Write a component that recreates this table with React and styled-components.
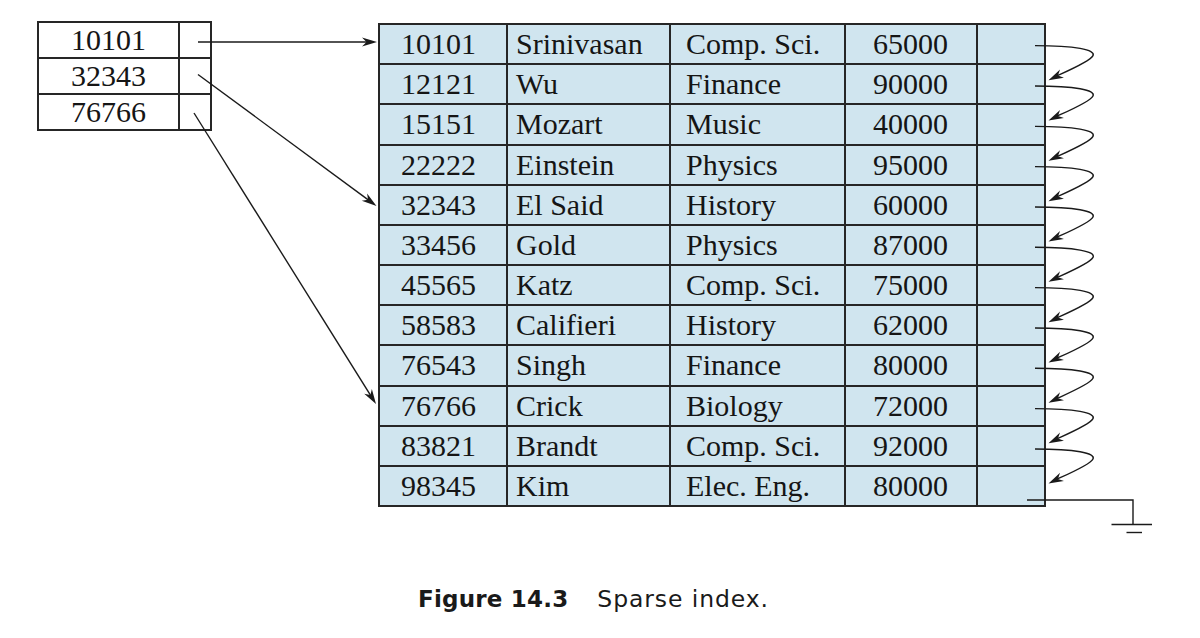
import React from "react";
import styled, { createGlobalStyle } from "styled-components";

const Global = createGlobalStyle`
  html, body { margin: 0; padding: 0; background: #ffffff; }
  body { width: 1200px; height: 638px; overflow: hidden; }
`;

const Page = styled.div`
  position: relative;
  width: 1200px;
  height: 638px;
  background: #fff;
`;

const Figure = styled.div`
  display: flex;
  align-items: flex-start;
  padding: 21px 0 0 37px;
`;

const Grid = styled.div`
  display: grid;
  box-sizing: border-box;
  background: #262626;
  padding: 2px;
  gap: 2px;
  grid-template-columns: ${(p) => p.$cols};
  grid-template-rows: repeat(${(p) => p.$rows}, 1fr);
  width: ${(p) => p.$w}px;
  height: ${(p) => p.$h}px;
  margin-left: ${(p) => p.$ml || 0}px;
  margin-top: ${(p) => p.$mt || 0}px;
`;

const Cell = styled.div`
  display: flex;
  align-items: center;
  justify-content: ${(p) => (p.$align === "left" ? "flex-start" : "center")};
  padding-left: ${(p) => p.$pl || 0}px;
  background: ${(p) => (p.$blue ? "#d0e5ef" : "#ffffff")};
  font-family: "Liberation Serif", "Times New Roman", serif;
  font-size: 30px;
  color: #151515;
  line-height: 1;
  white-space: nowrap;
  overflow: hidden;
`;

const Caption = styled.div`
  margin: 78px 0 0 418px;
  font-family: "DejaVu Sans", "Open Sans", sans-serif;
  color: #1a1a1a;
  display: flex;
  align-items: baseline;
`;

const CapNum = styled.span`
  font-weight: bold;
  font-size: 23px;
  letter-spacing: 0.2px;
  margin-right: 29px;
`;

const CapText = styled.span`
  font-weight: normal;
  font-size: 23.5px;
  letter-spacing: 0.9px;
`;

const Overlay = styled.svg`
  position: absolute;
  left: 0;
  top: 0;
  pointer-events: none;
`;

const index = ["10101", "32343", "76766"];

const rows = [
  ["10101", "Srinivasan", "Comp. Sci.", "65000"],
  ["12121", "Wu", "Finance", "90000"],
  ["15151", "Mozart", "Music", "40000"],
  ["22222", "Einstein", "Physics", "95000"],
  ["32343", "El Said", "History", "60000"],
  ["33456", "Gold", "Physics", "87000"],
  ["45565", "Katz", "Comp. Sci.", "75000"],
  ["58583", "Califieri", "History", "62000"],
  ["76543", "Singh", "Finance", "80000"],
  ["76766", "Crick", "Biology", "72000"],
  ["83821", "Brandt", "Comp. Sci.", "92000"],
  ["98345", "Kim", "Elec. Eng.", "80000"],
];

function head(tx, ty, fx, fy) {
  const dx = tx - fx;
  const dy = ty - fy;
  const len = Math.hypot(dx, dy) || 1;
  const ux = dx / len;
  const uy = dy / len;
  const px = -uy;
  const py = ux;
  const L = 15;
  const W = 4.5;
  const N = 10.5;
  const b1 = [tx - ux * L + px * W, ty - uy * L + py * W];
  const b2 = [tx - ux * L - px * W, ty - uy * L - py * W];
  const n = [tx - ux * N, ty - uy * N];
  return `${tx},${ty} ${b1[0]},${b1[1]} ${n[0]},${n[1]} ${b2[0]},${b2[1]}`;
}

const TOP = 23;
const RH = 40.33;

function Arrows() {
  const stroke = "#1a1a1a";
  const items = [];
  const ptrs = [
    [198, 42, 377, 42],
    [198, 74.5, 376.5, 206],
    [194, 113, 376, 404],
  ];
  ptrs.forEach(([x1, y1, x2, y2], i) => {
    const len = Math.hypot(x2 - x1, y2 - y1);
    const ex = x2 - ((x2 - x1) / len) * 9;
    const ey = y2 - ((y2 - y1) / len) * 9;
    items.push(
      <line key={"l" + i} x1={x1} y1={y1} x2={ex} y2={ey} stroke={stroke} strokeWidth="1.4" />
    );
    items.push(<polygon key={"h" + i} points={head(x2, y2, x1, y1)} fill={stroke} />);
  });
  for (let i = 0; i < 11; i++) {
    const c = TOP + RH * (i + 0.5);
    const y0 = c + 2.5;
    const tipX = 1048.5;
    const tipY = y0 + 34.5;
    const c2x = 1066;
    const c2y = y0 + 26;
    items.push(
      <path
        key={"c" + i}
        d={`M1035,${y0} C1075,${y0} 1096,${y0 + 4} 1093,${y0 + 10} C1090,${y0 + 16} ${c2x},${c2y} ${tipX + 6},${tipY - 3.2}`}
        fill="none"
        stroke={stroke}
        strokeWidth="1.4"
      />
    );
    items.push(<polygon key={"ch" + i} points={head(tipX, tipY, c2x, c2y)} fill={stroke} />);
  }
  const ly = 500;
  items.push(
    <path key="gnd" d={`M1027,${ly} H1133 V524.5`} fill="none" stroke={stroke} strokeWidth="1.4" />
  );
  items.push(<line key="g1" x1="1111.5" y1="524.5" x2="1152" y2="524.5" stroke={stroke} strokeWidth="1.4" />);
  items.push(<line key="g2" x1="1126.5" y1="532.5" x2="1142" y2="532.5" stroke={stroke} strokeWidth="1.4" />);
  return (
    <Overlay width="1200" height="638" viewBox="0 0 1200 638">
      {items}
    </Overlay>
  );
}

export default function App() {
  return (
    <Page>
      <Global />
      <Figure>
        <Grid $cols="139px 30px" $rows={3} $w={175} $h={110}>
          {index.map((k) => (
            <React.Fragment key={k}>
              <Cell>{k}</Cell>
              <Cell />
            </React.Fragment>
          ))}
        </Grid>
        <Grid
          $cols="126px 161px 173px 130px 66px"
          $rows={12}
          $w={668}
          $h={484}
          $ml={166}
          $mt={2}
        >
          {rows.map((r) => (
            <React.Fragment key={r[0]}>
              <Cell $blue $align="left" $pl={21}>
                {r[0]}
              </Cell>
              <Cell $blue $align="left" $pl={8}>
                {r[1]}
              </Cell>
              <Cell $blue $align="left" $pl={15}>
                {r[2]}
              </Cell>
              <Cell $blue $align="left" $pl={27}>
                {r[3]}
              </Cell>
              <Cell $blue />
            </React.Fragment>
          ))}
        </Grid>
      </Figure>
      <Caption>
        <CapNum>Figure 14.3</CapNum>
        <CapText>Sparse index.</CapText>
      </Caption>
      <Arrows />
    </Page>
  );
}
